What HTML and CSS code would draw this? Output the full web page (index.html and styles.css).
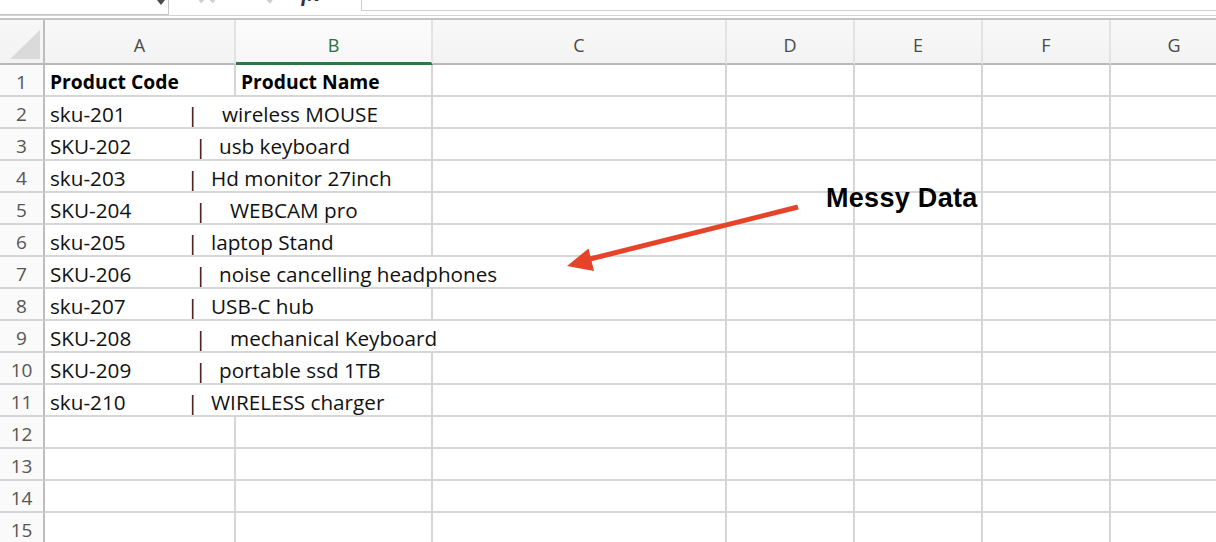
FILE: index.html
```html
<!DOCTYPE html>
<html lang="en">
<head>
<meta charset="utf-8">
<title>Messy Data</title>
<link rel="stylesheet" href="styles.css">
</head>
<body>
<div class="app">
  <div class="fbar">
    <div class="namebox"><span class="dd"></span></div>
    <div class="ficons">
      <svg class="ic-x" width="20" height="20" viewBox="0 0 20 20"><path d="M3 3 L17 17 M17 3 L3 17" stroke="#cfcfcf" stroke-width="3.5" fill="none"/></svg>
      <svg class="ic-chk" width="20" height="20" viewBox="0 0 20 20"><path d="M2 10 L9 17 L18 3" stroke="#cfcfcf" stroke-width="3.5" fill="none"/></svg>
      <span class="fx">fx</span>
    </div>
    <div class="finput"></div>
  </div>

  <div class="sheet">
    <div class="corner"><span class="tri"></span></div>
    <div class="ch">A</div>
    <div class="ch sel">B</div>
    <div class="ch">C</div>
    <div class="ch">D</div>
    <div class="ch">E</div>
    <div class="ch">F</div>
    <div class="ch">G</div>

    <div class="rh">1</div>
    <div class="c b">Product Code</div>
    <div class="c b">Product Name</div>
    <div class="c"></div><div class="c"></div><div class="c"></div><div class="c"></div><div class="c"></div>

    <div class="rh">2</div>
    <div class="c s2"><span class="code lo">sku-201</span><span class="pipe">|</span><span class="name n2">wireless MOUSE</span></div>
    <div class="c"></div><div class="c"></div><div class="c"></div><div class="c"></div><div class="c"></div>

    <div class="rh">3</div>
    <div class="c s2"><span class="code up">SKU-202</span><span class="pipe">|</span><span class="name n1">usb keyboard</span></div>
    <div class="c"></div><div class="c"></div><div class="c"></div><div class="c"></div><div class="c"></div>

    <div class="rh">4</div>
    <div class="c s2"><span class="code lo">sku-203</span><span class="pipe">|</span><span class="name n1">Hd monitor 27inch</span></div>
    <div class="c"></div><div class="c"></div><div class="c"></div><div class="c"></div><div class="c"></div>

    <div class="rh">5</div>
    <div class="c s2"><span class="code up">SKU-204</span><span class="pipe">|</span><span class="name n2">WEBCAM pro</span></div>
    <div class="c"></div><div class="c"></div><div class="c"></div><div class="c"></div><div class="c"></div>

    <div class="rh">6</div>
    <div class="c s2"><span class="code lo">sku-205</span><span class="pipe">|</span><span class="name n1">laptop Stand</span></div>
    <div class="c"></div><div class="c"></div><div class="c"></div><div class="c"></div><div class="c"></div>

    <div class="rh">7</div>
    <div class="c s3"><span class="code up">SKU-206</span><span class="pipe">|</span><span class="name n1">noise cancelling headphones</span></div>
    <div class="c"></div><div class="c"></div><div class="c"></div><div class="c"></div>

    <div class="rh">8</div>
    <div class="c s2"><span class="code lo">sku-207</span><span class="pipe">|</span><span class="name n1">USB-C hub</span></div>
    <div class="c"></div><div class="c"></div><div class="c"></div><div class="c"></div><div class="c"></div>

    <div class="rh">9</div>
    <div class="c s3"><span class="code up">SKU-208</span><span class="pipe">|</span><span class="name n2">mechanical Keyboard</span></div>
    <div class="c"></div><div class="c"></div><div class="c"></div><div class="c"></div>

    <div class="rh">10</div>
    <div class="c s2"><span class="code up">SKU-209</span><span class="pipe">|</span><span class="name n1">portable ssd 1TB</span></div>
    <div class="c"></div><div class="c"></div><div class="c"></div><div class="c"></div><div class="c"></div>

    <div class="rh">11</div>
    <div class="c s2"><span class="code lo">sku-210</span><span class="pipe">|</span><span class="name n1">WIRELESS charger</span></div>
    <div class="c"></div><div class="c"></div><div class="c"></div><div class="c"></div><div class="c"></div>

    <div class="rh">12</div>
    <div class="c"></div><div class="c"></div><div class="c"></div><div class="c"></div><div class="c"></div><div class="c"></div><div class="c"></div>
    <div class="rh">13</div>
    <div class="c"></div><div class="c"></div><div class="c"></div><div class="c"></div><div class="c"></div><div class="c"></div><div class="c"></div>
    <div class="rh">14</div>
    <div class="c"></div><div class="c"></div><div class="c"></div><div class="c"></div><div class="c"></div><div class="c"></div><div class="c"></div>
    <div class="rh">15</div>
    <div class="c"></div><div class="c"></div><div class="c"></div><div class="c"></div><div class="c"></div><div class="c"></div><div class="c"></div>
  </div>

  <svg class="arrow" width="1216" height="542" viewBox="0 0 1216 542">
    <line x1="798" y1="207" x2="586" y2="260" stroke="#e5432a" stroke-width="5" stroke-linecap="butt"/>
    <polygon points="567,266 588.5,248.5 594,271" fill="#e5432a"/>
  </svg>
  <div class="note">Messy Data</div>
</div>
</body>
</html>
```

FILE: styles.css
```css
html, body {
  margin: 0;
  padding: 0;
  background: #ffffff;
  overflow: hidden;
}

.app {
  position: relative;
  width: 1216px;
  height: 542px;
  overflow: hidden;
  background: #ffffff;
}

/* formula bar */
.fbar {
  display: flex;
  height: 16px;
  border-bottom: 1px solid #d3d3d3;
  box-sizing: border-box;
  overflow: hidden;
}

.namebox {
  width: 169px;
  height: 15px;
  box-sizing: border-box;
  border-right: 1px solid #c6c6c6;
  border-bottom: 1px solid #c6c6c6;
  display: flex;
  justify-content: flex-end;
  align-items: flex-start;
  padding-right: 3px;
}

.dd {
  width: 0;
  height: 0;
  border-left: 4px solid transparent;
  border-right: 4px solid transparent;
  border-top: 5px solid #4a4a4a;
}

.ficons {
  width: 192px;
  display: flex;
  align-items: flex-start;
  overflow: hidden;
}

.ic-x {
  margin-left: 28px;
  margin-top: -15px;
}

.ic-chk {
  margin-left: 44px;
  margin-top: -16px;
}

.fx {
  margin-left: 20px;
  margin-top: -17px;
  font-family: "Liberation Serif", serif;
  font-style: italic;
  font-weight: bold;
  font-size: 22px;
  line-height: 22px;
  color: #333333;
}

.finput {
  flex: 1;
  height: 10px;
  border-left: 1px solid #cfcfcf;
  border-bottom: 1px solid #cfcfcf;
}

/* sheet */
.sheet {
  margin-top: 2px;
  border-top: 2px solid #c4c4c4;
  display: grid;
  grid-template-columns: 45px 191px 197px 294px 128px 128px 128px 128px;
  grid-template-rows: 45px repeat(15, 32px);
  background: #ffffff;
}

.corner {
  box-sizing: border-box;
  background: linear-gradient(#f7f7f7, #f3f3f3);
  border-right: 2px solid #bdbdbd;
  border-bottom: 2px solid #b8b8b8;
  display: flex;
  justify-content: flex-end;
  align-items: flex-end;
  padding: 0 3px 4px 0;
}

.tri {
  width: 30px;
  height: 29px;
  background: #dadada;
  clip-path: polygon(100% 0, 100% 100%, 0 100%);
}

.ch {
  box-sizing: border-box;
  background: linear-gradient(#f8f8f8, #f3f3f3);
  border-right: 2px solid #e3e3e3;
  border-bottom: 2px solid #b8b8b8;
  font-family: "Open Sans", "Liberation Sans", sans-serif;
  font-size: 18px;
  line-height: 35px;
  padding-top: 8px;
  text-align: center;
  color: #4a4a4a;
}

.ch.sel {
  background: linear-gradient(#fbfbfb, #f7f7f7);
  color: #2b6e3f;
  border-bottom: 3px solid #2f7644;
  border-right-color: #e3e3e3;
}

.rh {
  box-sizing: border-box;
  background: #fafafa;
  border-right: 2px solid #bdbdbd;
  border-bottom: 2px solid #d6d6d6;
  font-family: "Open Sans", Lato, sans-serif;
  font-size: 19px;
  line-height: 28px;
  padding-top: 3px;
  text-align: center;
  color: #555555;
}

.c {
  box-sizing: border-box;
  border-right: 2px solid #d6d6d6;
  border-bottom: 2px solid #d6d6d6;
  font-family: "Open Sans", Lato, sans-serif;
  font-size: 20.7px;
  line-height: 28px;
  padding: 3px 0 0 5px;
  color: #111111;
  white-space: nowrap;
  display: flex;
}

.c.b {
  font-weight: bold;
  font-size: 19.3px;
  color: #000000;
}

.c.s2 {
  grid-column: span 2;
}

.c.s3 {
  grid-column: span 3;
}

.code {
  display: inline-block;
}

.code.lo {
  width: 137px;
}

.code.up {
  width: 145px;
}

.pipe {
  display: inline-block;
  width: 4px;
}

.name.n1 {
  margin-left: 20px;
}

.name.n2 {
  margin-left: 31px;
}

/* annotation */
.arrow {
  position: absolute;
  left: 0;
  top: 0;
  pointer-events: none;
}

.note {
  position: absolute;
  left: 826px;
  top: 185px;
  font-family: "Liberation Sans", Arial, sans-serif;
  font-weight: bold;
  font-size: 27px;
  letter-spacing: 0.3px;
  line-height: 1;
  color: #000000;
}
```
